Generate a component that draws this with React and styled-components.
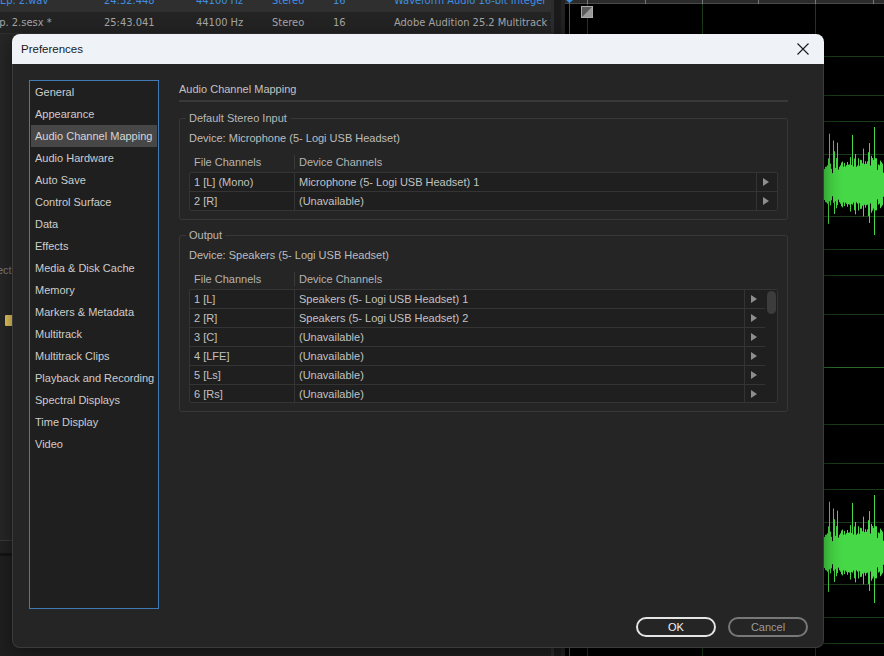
import styled, { createGlobalStyle } from "styled-components"

const GlobalStyle = createGlobalStyle`
  html, body {
    margin: 0;
    padding: 0;
    background: #1b1b1b;
  }
  body {
    font-family: "Liberation Sans", Arial, sans-serif;
  }
  * {
    box-sizing: border-box;
  }
`

const files = [
  { name: "Ep. 2.wav", duration: "24:32.448", rate: "44100 Hz", channels: "Stereo", bits: "16", format: "Waveform Audio 16-bit Integer", active: true },
  { name: "Ep. 2.sesx *", duration: "25:43.041", rate: "44100 Hz", channels: "Stereo", bits: "16", format: "Adobe Audition 25.2 Multitrack Session", shift: true },
]

const categories = [
  "General",
  "Appearance",
  "Audio Channel Mapping",
  "Audio Hardware",
  "Auto Save",
  "Control Surface",
  "Data",
  "Effects",
  "Media & Disk Cache",
  "Memory",
  "Markers & Metadata",
  "Multitrack",
  "Multitrack Clips",
  "Playback and Recording",
  "Spectral Displays",
  "Time Display",
  "Video",
]

const inputMap = [
  ["1 [L] (Mono)", "Microphone (5- Logi USB Headset) 1"],
  ["2 [R]", "(Unavailable)"],
]

const outputMap = [
  ["1 [L]", "Speakers (5- Logi USB Headset) 1"],
  ["2 [R]", "Speakers (5- Logi USB Headset) 2"],
  ["3 [C]", "(Unavailable)"],
  ["4 [LFE]", "(Unavailable)"],
  ["5 [Ls]", "(Unavailable)"],
  ["6 [Rs]", "(Unavailable)"],
]

// --- waveform drawing (background editor) ---

const WAVE_W = 319
const WAVE_H = 656

function makeRandom(seed) {
  let s = seed
  return () => {
    s = (s * 1664525 + 1013904223) % 4294967296
    return s / 4294967296
  }
}

function wavePath(center, seed) {
  const rand = makeRandom(seed)
  let d = ""
  for (let x = 0; x < WAVE_W; x++) {
    const swell = 1 + 0.25 * Math.sin(x / 9)
    const body = (15 + rand() * 13) * swell
    const spike = rand() < 0.2 ? 8 + rand() * 28 : 0
    const up = Math.min(body + (rand() < 0.6 ? spike : spike * 0.3), 58)
    const down = Math.min(body * 0.95 + (rand() < 0.6 ? spike * 0.8 : 0), 50)
    d += `M${x + 0.5} ${(center - up).toFixed(1)}V${(center + down).toFixed(1)}`
  }
  return d
}

const gridOffsets = [-129, -90, -64, -31, 31, 64, 90, 129]

function WaveformView() {
  const lines = []
  ;[185, 553].forEach((c) => {
    gridOffsets.forEach((o) => {
      if (c + o > 4 && c + o < WAVE_H) lines.push(c + o)
    })
  })

  return (
    <svg width={WAVE_W} height={WAVE_H} viewBox={`0 0 ${WAVE_W} ${WAVE_H}`}>
      <rect width={WAVE_W} height={WAVE_H} fill="#000" />
      {lines.map((y) => (
        <line key={y} x1="0" x2={WAVE_W} y1={y + 0.5} y2={y + 0.5} stroke="#173c17" />
      ))}
      <line x1="0" x2={WAVE_W} y1="367.5" y2="367.5" stroke="#2c6a2c" />
      {[22, 137, 250].map((x) => (
        <line key={x} x1={x + 0.5} x2={x + 0.5} y1="4" y2={WAVE_H} stroke="#173c17" />
      ))}
      <path d={wavePath(185, 7)} stroke="#46d846" strokeWidth="1" />
      <path d={wavePath(553, 7)} stroke="#46d846" strokeWidth="1" />
      <rect x="0" y="0" width={WAVE_W} height="3" fill="#2b2b2b" />
      <line x1="0" x2={WAVE_W} y1="3.5" y2="3.5" stroke="#4a4a4a" />
      {[22, 80, 137, 193, 250, 308].map((x) => (
        <line key={x} x1={x + 0.5} x2={x + 0.5} y1="0" y2="4" stroke="#777" />
      ))}
      <line x1="4.5" x2="4.5" y1="0" y2={WAVE_H} stroke="#c21f1f" />
      <polygon points="1,0 8,0 4.5,3" fill="#3d8fe0" />
      <rect x="16.5" y="6.5" width="11" height="11" fill="#9a9a9a" stroke="#aaa" />
      <polygon points="17,7 27,7 17,17" fill="#5a5a5a" />
    </svg>
  )
}

// --- dialog ---

export default function App() {
  return (
    <>
      <GlobalStyle />
      <Editor>
        <FilesPanel>
          {files.map((f) => (
            <FileRow key={f.name} $active={f.active}>
              <FileCell $shift={f.shift}>{f.name}</FileCell>
              <FileCell>{f.duration}</FileCell>
              <FileCell>{f.rate}</FileCell>
              <FileCell>{f.channels}</FileCell>
              <FileCell>{f.bits}</FileCell>
              <FileCell>{f.format}</FileCell>
            </FileRow>
          ))}
          <TrackPane>
            <PaneLabel>Select</PaneLabel>
            <ClipChip />
          </TrackPane>
          <PaneFooter />
          <StatusArea />
        </FilesPanel>
        <Gutter />
        <WaveArea>
          <WaveformView />
        </WaveArea>

        <Dialog>
          <TitleBar>
            <Title>Preferences</Title>
            <CloseButton aria-label="Close">
              <svg width="12" height="12" viewBox="0 0 12 12">
                <path d="M0.5 0.5L11.5 11.5M11.5 0.5L0.5 11.5" stroke="#1a1a1a" strokeWidth="1.1" />
              </svg>
            </CloseButton>
          </TitleBar>
          <Body>
            <Main>
              <CategoryList>
                {categories.map((c) => (
                  <CategoryItem key={c} $selected={c === "Audio Channel Mapping"}>
                    {c}
                  </CategoryItem>
                ))}
              </CategoryList>
              <Content>
                <SectionTitle>Audio Channel Mapping</SectionTitle>

                <Group $first>
                  <GroupLegend>Default Stereo Input</GroupLegend>
                  <DeviceLabel>Device: Microphone (5- Logi USB Headset)</DeviceLabel>
                  <ColumnHeader>
                    <HeaderCell $first>File Channels</HeaderCell>
                    <HeaderCell>Device Channels</HeaderCell>
                  </ColumnHeader>
                  <Table>
                    <TableRows>
                      {inputMap.map(([file, device]) => (
                        <Row key={file}>
                          <Cell>{file}</Cell>
                          <Cell>{device}</Cell>
                          <ArrowCell>
                            <Arrow />
                          </ArrowCell>
                        </Row>
                      ))}
                    </TableRows>
                  </Table>
                </Group>

                <Group>
                  <GroupLegend>Output</GroupLegend>
                  <DeviceLabel>Device: Speakers (5- Logi USB Headset)</DeviceLabel>
                  <ColumnHeader>
                    <HeaderCell $first>File Channels</HeaderCell>
                    <HeaderCell>Device Channels</HeaderCell>
                  </ColumnHeader>
                  <Table>
                    <TableRows $height={112}>
                      {outputMap.map(([file, device]) => (
                        <Row key={file} $divided>
                          <Cell>{file}</Cell>
                          <Cell>{device}</Cell>
                          <ArrowCell>
                            <Arrow />
                          </ArrowCell>
                        </Row>
                      ))}
                    </TableRows>
                    <ScrollTrack>
                      <ScrollThumb />
                    </ScrollTrack>
                  </Table>
                </Group>
              </Content>
            </Main>
            <Footer>
              <DialogButton $primary>OK</DialogButton>
              <DialogButton>Cancel</DialogButton>
            </Footer>
          </Body>
        </Dialog>
      </Editor>
    </>
  )
}

const Editor = styled.div`
  position: relative;
  width: 884px;
  height: 656px;
  overflow: hidden;
  display: flex;
  background: #1b1b1b;
`

const FilesPanel = styled.div`
  width: 551px;
  display: flex;
  flex-direction: column;
  background: #242424;
  overflow: hidden;
`

const FileRow = styled.div`
  height: 22px;
  flex-shrink: 0;
  display: grid;
  grid-template-columns: 104px 92px 76px 61px 61px 1fr;
  align-items: center;
  margin-top: ${(p) => (p.$active ? "-10px" : "0")};
  background: ${(p) => (p.$active ? "#2f2f2f" : "#232323")};
  border-bottom: 1px solid ${(p) => (p.$active ? "#2f2f2f" : "#303030")};
  color: ${(p) => (p.$active ? "#3f8fe2" : "#a6a6a6")};
  font-family: "Liberation Sans Narrow", "DejaVu Sans Condensed", "Liberation Sans", sans-serif;
  font-size: 11px;
  white-space: nowrap;
`

const FileCell = styled.div`
  overflow: hidden;
  margin-left: ${(p) => (p.$shift ? "-7px" : "0")};
`

const TrackPane = styled.div`
  flex: 1;
  display: flex;
  flex-direction: column;
  background: #262626;
`

const PaneLabel = styled.div`
  margin-top: 228px;
  margin-left: -19px;
  height: 16px;
  line-height: 16px;
  font-size: 11px;
  color: #7d7d7d;
`

const ClipChip = styled.div`
  margin: 37px 0 0 5px;
  width: 12px;
  height: 11px;
  background: #e3c35a;
  border-radius: 1px;
`

const PaneFooter = styled.div`
  height: 16px;
  flex-shrink: 0;
  background: #222;
  border-top: 1px solid #3a3a3a;
  border-bottom: 3px solid #141414;
`

const StatusArea = styled.div`
  height: 100px;
  flex-shrink: 0;
  background: #1f1f1f;
`

const Gutter = styled.div`
  width: 14px;
  background: #1a1a1a;
  border-left: 3px solid #2c2c2c;
  border-right: 4px solid #222;
`

const WaveArea = styled.div`
  flex: 1;
  background: #000;
  svg {
    display: block;
  }
`

const Dialog = styled.div`
  position: absolute;
  left: 12px;
  top: 34px;
  width: 812px;
  height: 614px;
  display: flex;
  flex-direction: column;
  border-radius: 8px;
  box-shadow: 0 4px 18px rgba(0, 0, 0, 0.45);
`

const TitleBar = styled.div`
  height: 30px;
  flex-shrink: 0;
  display: flex;
  align-items: center;
  justify-content: space-between;
  padding: 0 9px 0 9px;
  background: #eff3f8;
  border-radius: 8px 8px 0 0;
`

const Title = styled.span`
  font-size: 11.5px;
  color: #1a1a1a;
`

const CloseButton = styled.button`
  width: 24px;
  height: 24px;
  display: flex;
  align-items: center;
  justify-content: center;
  padding: 0;
  border: none;
  background: transparent;
`

const Body = styled.div`
  flex: 1;
  display: flex;
  flex-direction: column;
  padding: 16px 15px 10px 16px;
  background: #252525;
  border: 1px solid #3b3b3b;
  border-top: none;
  border-radius: 0 0 8px 8px;
  color: #c4c4c4;
  font-size: 11px;
`

const Main = styled.div`
  flex: 1;
  display: flex;
  gap: 20px;
  min-height: 0;
`

const CategoryList = styled.div`
  width: 130px;
  display: flex;
  flex-direction: column;
  padding: 0 1px;
  background: #1f1f1f;
  border: 1px solid #4179b8;
`

const CategoryItem = styled.div`
  height: 22px;
  line-height: 22px;
  padding-left: 4px;
  white-space: nowrap;
  font-size: 11px;
  color: ${(p) => (p.$selected ? "#d6d6d6" : "#cdcdcd")};
  background: ${(p) => (p.$selected ? "#474747" : "transparent")};
`

const Content = styled.div`
  width: 609px;
  display: flex;
  flex-direction: column;
`

const SectionTitle = styled.div`
  margin-top: 1px;
  height: 21px;
  line-height: 16px;
  padding-bottom: 3px;
  border-bottom: 2px solid #393939;
  color: #c2c2c2;
`

const Group = styled.fieldset`
  margin: ${(p) => (p.$first ? "8px" : "7px")} 0 0;
  padding: 0 9px 8px;
  border: 1px solid #383838;
  border-radius: 3px;
  min-width: 0;
`

const GroupLegend = styled.legend`
  margin-left: -3px;
  padding: 0 3px;
  line-height: 16px;
  color: #b8b8b8;
`

const DeviceLabel = styled.div`
  padding-top: 4px;
  line-height: 16px;
  color: #bdbdbd;
`

const ColumnHeader = styled.div`
  margin-top: 7px;
  height: 18px;
  display: flex;
  align-items: center;
  color: #b4b4b4;
`

const HeaderCell = styled.div`
  ${(p) =>
    p.$first
      ? `
    width: 106px;
    padding-left: 5px;
    border-right: 1px solid #3a3a3a;
    line-height: 14px;
  `
      : `
    padding-left: 4px;
  `}
`

const Table = styled.div`
  margin-top: 1px;
  display: flex;
  border: 1px solid #343434;
  border-radius: 2px;
  background: #1f1f1f;
`

const TableRows = styled.div`
  flex: 1;
  display: flex;
  flex-direction: column;
  height: ${(p) => (p.$height ? `${p.$height}px` : "auto")};
  overflow: hidden;
`

const Row = styled.div`
  flex-shrink: 0;
  height: 19px;
  display: grid;
  grid-template-columns: 105px 1fr 20px;
  border-bottom: 1px solid #343434;
  &:last-child {
    border-bottom: ${(p) => (p.$divided ? "1px solid #343434" : "none")};
    height: ${(p) => (p.$divided ? "19px" : "18px")};
  }
`

const Cell = styled.div`
  display: flex;
  align-items: center;
  padding-left: 4px;
  border-right: 1px solid #343434;
  color: #c2c2c2;
  white-space: nowrap;
  overflow: hidden;
`

const ArrowCell = styled.div`
  display: flex;
  align-items: center;
  padding-left: 6px;
`

const Arrow = styled.span`
  width: 0;
  height: 0;
  border-left: 6px solid #8e8e8e;
  border-top: 4.5px solid transparent;
  border-bottom: 4.5px solid transparent;
`

const ScrollTrack = styled.div`
  width: 12px;
  padding: 1px 1px 0 2px;
`

const ScrollThumb = styled.div`
  width: 9px;
  height: 23px;
  border-radius: 5px;
  background: #3c3c3c;
`

const Footer = styled.div`
  margin-top: 8px;
  display: flex;
  justify-content: flex-end;
  gap: 12px;
`

const DialogButton = styled.button`
  width: 80px;
  height: 20px;
  padding: 0;
  border-radius: 10px;
  background: transparent;
  font-family: "Liberation Sans", Arial, sans-serif;
  font-size: 11px;
  border: 2px solid ${(p) => (p.$primary ? "#e4e4e4" : "#787878")};
  color: ${(p) => (p.$primary ? "#f2f2f2" : "#9a9a9a")};
`
